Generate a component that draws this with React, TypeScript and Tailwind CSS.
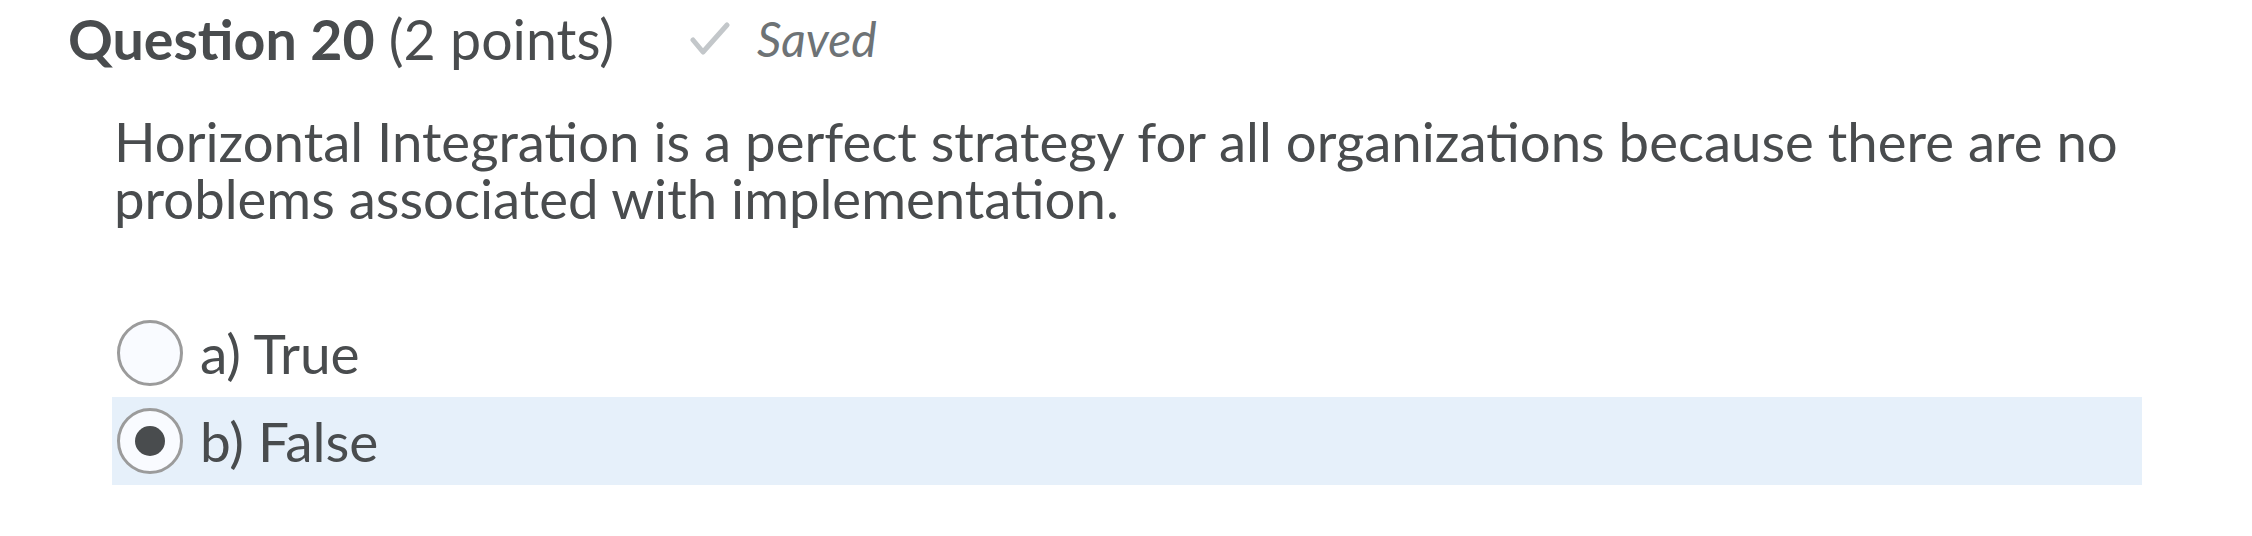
interface Choice {
  label: string
  selected: boolean
}

const choices: Choice[] = [
  { label: "a) True", selected: false },
  { label: "b) False", selected: true },
]

function Radio({ selected }: { selected: boolean }) {
  return (
    <span className="flex h-[66px] w-[66px] shrink-0 items-center justify-center rounded-full border-[3px] border-[#9b9b9b] bg-[#f9fbff]">
      {selected && <span className="h-[30px] w-[30px] rounded-full bg-[#494c4e]" />}
    </span>
  )
}

// light gray tick shown next to the saved state
function SavedCheck() {
  return (
    <svg width="40" height="36" viewBox="0 0 40 36" fill="none" className="shrink-0">
      <polyline
        points="3,19 13,31 37,4"
        stroke="#c3c7ca"
        strokeWidth="5"
        strokeLinecap="round"
        strokeLinejoin="round"
      />
    </svg>
  )
}

export default function App() {
  return (
    <div className="h-[536px] w-full bg-white font-['Lato',sans-serif] text-[#494c4e]">
      <div className="flex h-[78px] items-center pl-[68px]">
        <h2 className="text-[55.5px] leading-none">
          <span className="font-bold">Question 20</span> (2 points)
        </h2>
        <span className="ml-[76px] flex items-center gap-[27px] text-[#6e7376]">
          <SavedCheck />
          <span className="text-[48px] italic leading-none">Saved</span>
        </span>
      </div>
      <div className="pl-[112px] pr-[110px]">
        <p className="mt-[35px] pl-[2px] text-[54.5px] leading-[57px]">
          Horizontal Integration is a perfect strategy for all organizations because there are no problems associated with implementation.
        </p>
        <div className="mt-[82px] flex flex-col">
          {choices.map((choice) => (
            <label
              key={choice.label}
              className={`flex h-[88px] items-center gap-[17px] pl-[5px] ${choice.selected ? "bg-[#e6f0fa]" : ""}`}
            >
              <Radio selected={choice.selected} />
              <span className="text-[55px] leading-none">{choice.label}</span>
            </label>
          ))}
        </div>
      </div>
    </div>
  )
}
